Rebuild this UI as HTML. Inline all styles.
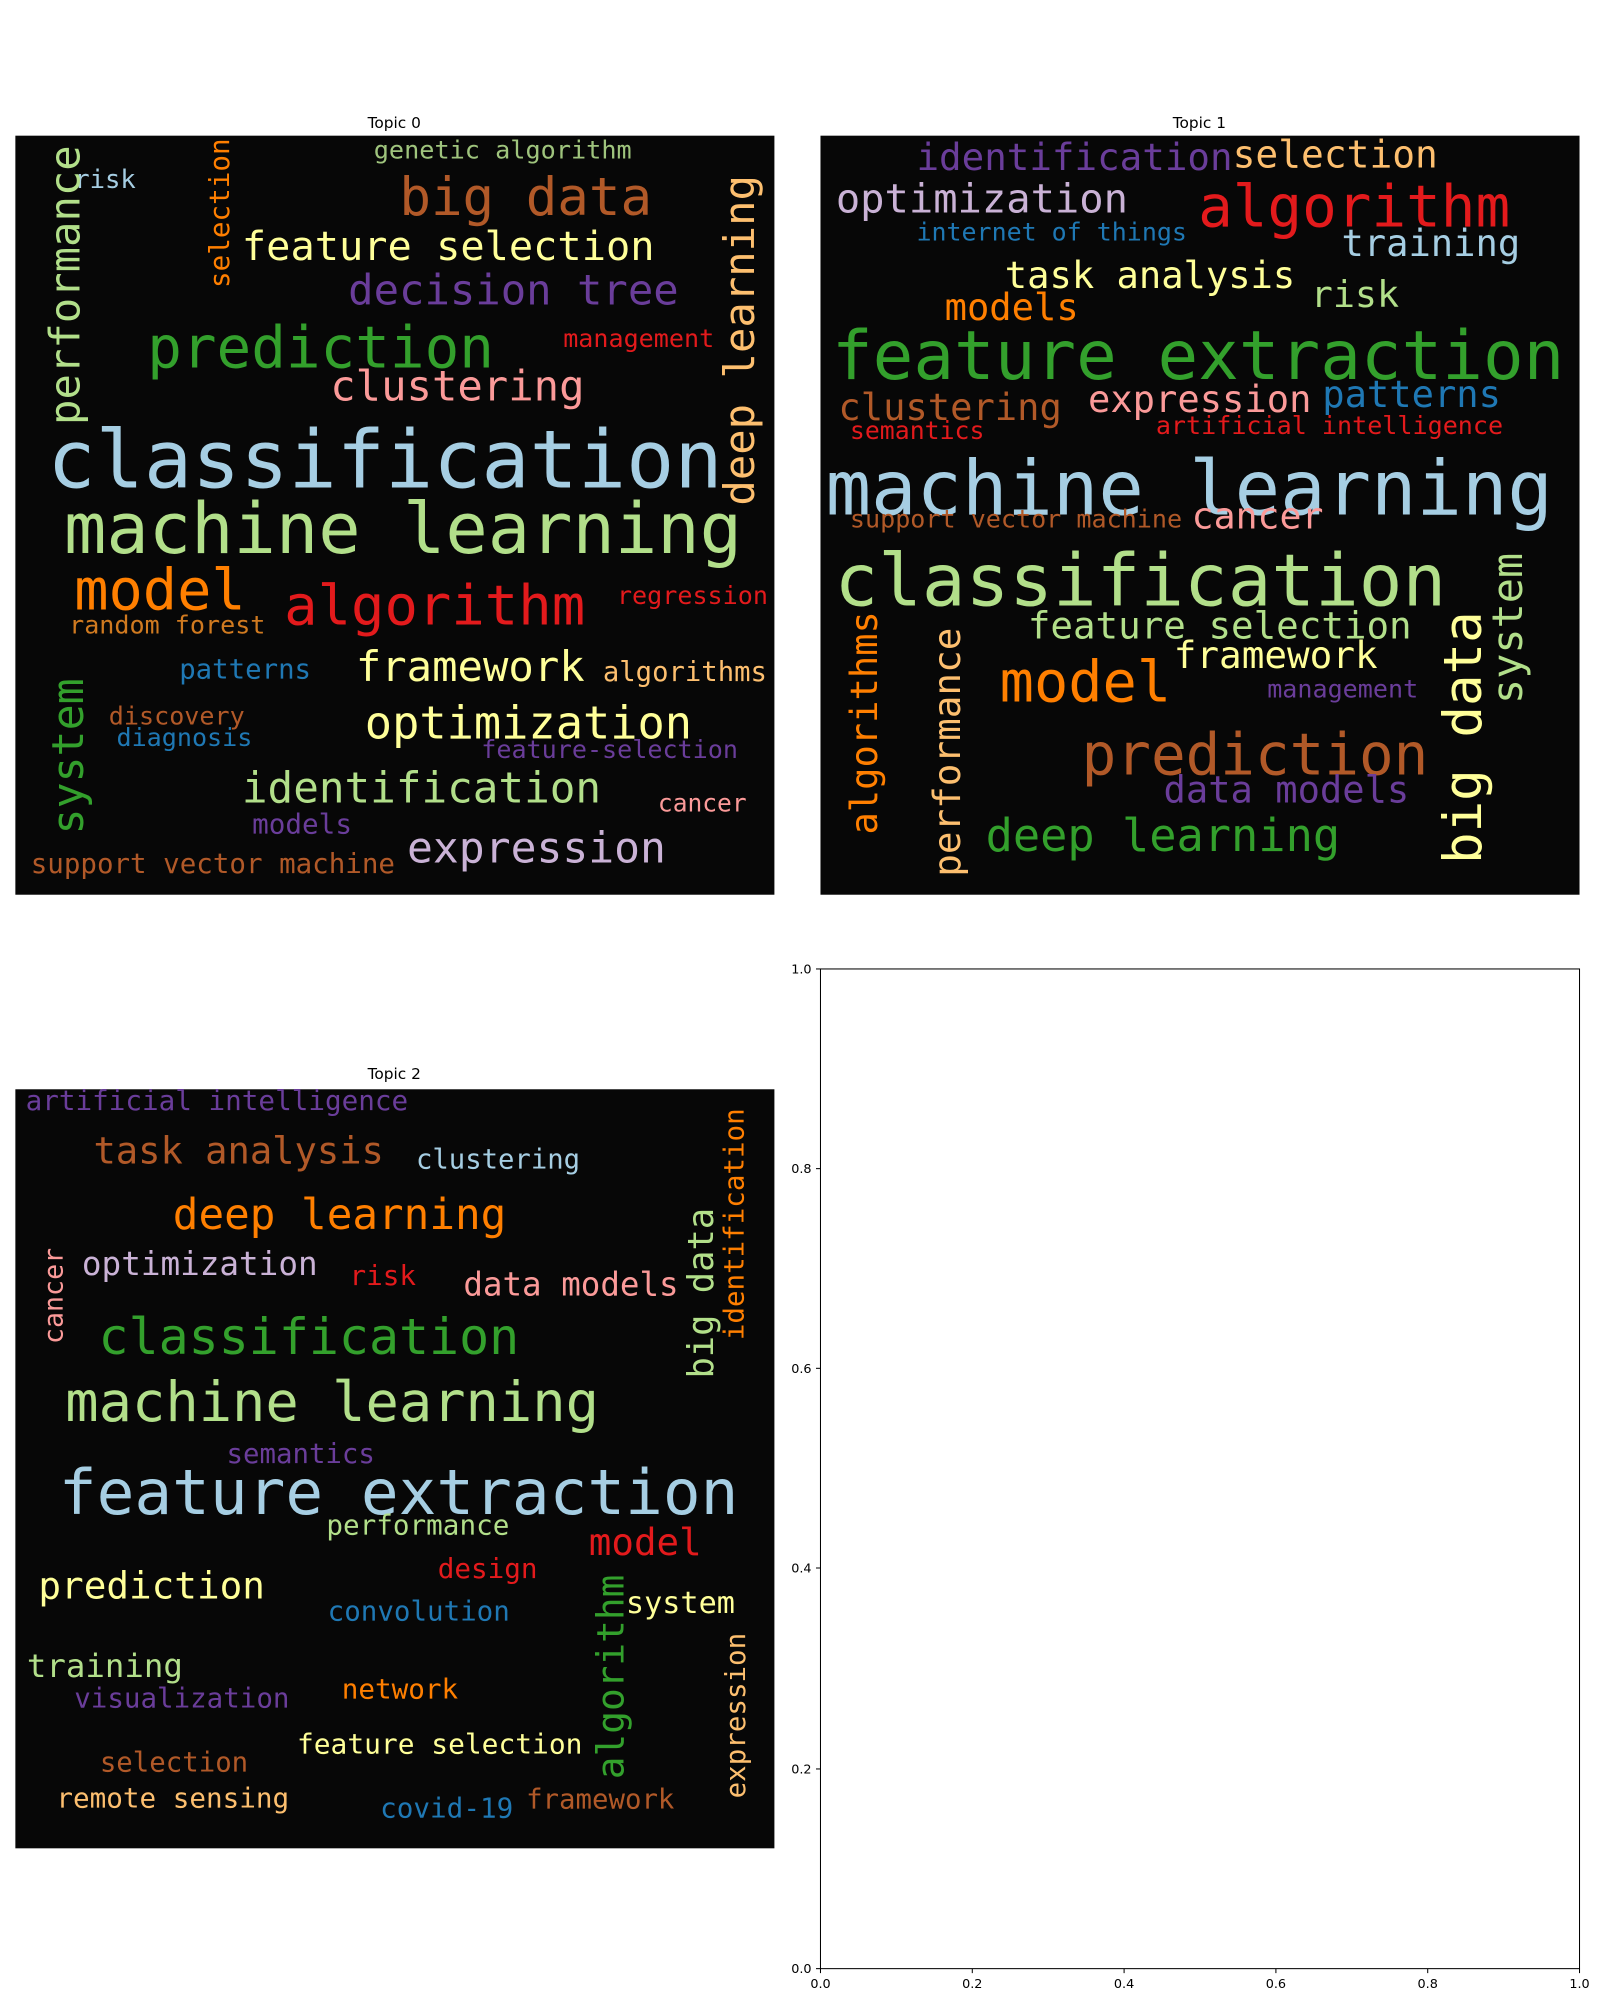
<!DOCTYPE html>
<html><head><meta charset="utf-8"><style>
html,body{margin:0;padding:0;background:#fff;}
svg{display:block}
.w{font-family:"DejaVu Sans Mono","Liberation Mono",monospace;}
.t{font-family:"DejaVu Sans","Liberation Sans",sans-serif;fill:#000}
</style></head><body>
<svg width="1600" height="2000" viewBox="0 0 1250 1562.5" xmlns="http://www.w3.org/2000/svg">
<rect x="0" y="0" width="1250" height="1562.5" fill="#fff"/>
<text class="t" x="308" y="100" font-size="12" text-anchor="middle">Topic 0</text>
<text class="t" x="937" y="100" font-size="12" text-anchor="middle">Topic 1</text>
<text class="t" x="308" y="843" font-size="12" text-anchor="middle">Topic 2</text>
<rect x="12" y="106" width="593" height="593" fill="#070707"/>
<rect x="641" y="106" width="593" height="593" fill="#070707"/>
<rect x="12" y="851" width="593" height="593" fill="#070707"/>

<g class="w">
<!-- Topic 0 -->
<text x="292" y="124" font-size="19.7" fill="#9fc47d">genetic algorithm</text>
<text x="58" y="147" font-size="20" fill="#a6cee3">risk</text>
<text transform="translate(62,332) rotate(-90)" font-size="33" fill="#b2df8a">performance</text>
<text transform="translate(179,225) rotate(-90)" font-size="21.6" fill="#ff7f00">selection</text>
<text x="312" y="168" font-size="41" fill="#b15928">big data</text>
<text x="189" y="203" font-size="31.5" fill="#ffff99">feature selection</text>
<text x="272" y="238" font-size="33" fill="#6a3d9a">decision tree</text>
<text transform="translate(589,395) rotate(-90)" font-size="33" fill="#fdbf6f">deep learning</text>
<text x="115" y="287" font-size="45" fill="#33a02c">prediction</text>
<text x="440" y="271" font-size="19.6" fill="#e31a1c">management</text>
<text x="258" y="313" font-size="33" fill="#fb9a99">clustering</text>
<text x="37" y="381" font-size="62.6" fill="#a6cee3">classification</text>
<text x="50" y="432" font-size="55" fill="#b2df8a">machine learning</text>
<text x="58" y="476" font-size="44.5" fill="#ff7f00">model</text>
<text x="222" y="488" font-size="43.4" fill="#e31a1c">algorithm</text>
<text x="482" y="472" font-size="19.6" fill="#e31a1c">regression</text>
<text x="54" y="495" font-size="19.6" fill="#d07a20">random forest</text>
<text x="140" y="530" font-size="21.4" fill="#1f78b4">patterns</text>
<text x="278" y="532" font-size="33" fill="#ffff99">framework</text>
<text x="471" y="532" font-size="21.3" fill="#fdbf6f">algorithms</text>
<text transform="translate(65,652) rotate(-90)" font-size="33.8" fill="#33a02c">system</text>
<text x="85" y="566" font-size="19.6" fill="#b15928">discovery</text>
<text x="91" y="583" font-size="19.6" fill="#1f78b4">diagnosis</text>
<text x="285" y="577" font-size="35.4" fill="#ffff99">optimization</text>
<text x="376" y="592" font-size="19.6" fill="#6a3d9a">feature-selection</text>
<text x="189" y="627" font-size="33.3" fill="#b2df8a">identification</text>
<text x="514" y="634" font-size="19.2" fill="#fb9a99">cancer</text>
<text x="197" y="651" font-size="21.6" fill="#6a3d9a">models</text>
<text x="24" y="682" font-size="21.5" fill="#b15928">support vector machine</text>
<text x="318" y="674" font-size="33.6" fill="#cab2d6">expression</text>

<!-- Topic 1 -->
<text x="716" y="133" font-size="29.3" fill="#6a3d9a">identification</text>
<text x="963" y="131" font-size="29.6" fill="#fdbf6f">selection</text>
<text x="653" y="166" font-size="31.6" fill="#cab2d6">optimization</text>
<text x="936" y="177" font-size="45" fill="#e31a1c">algorithm</text>
<text x="716" y="188" font-size="19.5" fill="#1f78b4">internet of things</text>
<text x="1048" y="200" font-size="29" fill="#a6cee3">training</text>
<text x="785" y="225" font-size="29" fill="#ffff99">task analysis</text>
<text x="1024" y="240" font-size="28.7" fill="#b2df8a">risk</text>
<text x="738" y="250" font-size="29" fill="#ff7f00">models</text>
<text x="650" y="296" font-size="52.8" fill="#33a02c">feature extraction</text>
<text x="655" y="328" font-size="29" fill="#b15928">clustering</text>
<text x="850" y="322" font-size="29" fill="#fb9a99">expression</text>
<text x="1033" y="318" font-size="29" fill="#1f78b4">patterns</text>
<text x="664" y="343" font-size="19.4" fill="#e31a1c">semantics</text>
<text x="903" y="339" font-size="19.6" fill="#e31a1c">artificial intelligence</text>
<text x="645" y="402" font-size="59" fill="#a6cee3">machine learning</text>
<text x="664" y="412" font-size="19.6" fill="#b15928">support vector machine</text>
<text x="931" y="413" font-size="28.5" fill="#fb9a99">cancer</text>
<text x="652" y="473" font-size="56.7" fill="#b2df8a">classification</text>
<text transform="translate(1189,550) rotate(-90)" font-size="32.7" fill="#b2df8a">system</text>
<text x="803" y="499" font-size="29.3" fill="#b2df8a">feature selection</text>
<text transform="translate(1157,675) rotate(-90)" font-size="41" fill="#ffff99">big data</text>
<text transform="translate(685,652) rotate(-90)" font-size="29" fill="#ff7f00">algorithms</text>
<text transform="translate(750,685) rotate(-90)" font-size="29.4" fill="#fdbf6f">performance</text>
<text x="917" y="522" font-size="29.4" fill="#ffff99">framework</text>
<text x="781" y="548" font-size="44.5" fill="#ff7f00">model</text>
<text x="990" y="545" font-size="19.6" fill="#6a3d9a">management</text>
<text x="845" y="605" font-size="45" fill="#b15928">prediction</text>
<text x="909" y="627" font-size="29" fill="#6a3d9a">data models</text>
<text x="770" y="665" font-size="35.4" fill="#33a02c">deep learning</text>

<!-- Topic 2 -->
<text x="20" y="867" font-size="21.6" fill="#6a3d9a">artificial intelligence</text>
<text x="73" y="909" font-size="29" fill="#b15928">task analysis</text>
<text x="325" y="913" font-size="21.3" fill="#a6cee3">clustering</text>
<text transform="translate(581,1047) rotate(-90)" font-size="21.5" fill="#ff7f00">identification</text>
<text x="135" y="960" font-size="33.3" fill="#ff7f00">deep learning</text>
<text transform="translate(557,1077) rotate(-90)" font-size="27.7" fill="#b2df8a">big data</text>
<text transform="translate(49,1050) rotate(-90)" font-size="20.8" fill="#fb9a99">cancer</text>
<text x="64" y="996" font-size="25.5" fill="#cab2d6">optimization</text>
<text x="273" y="1004" font-size="21.6" fill="#e31a1c">risk</text>
<text x="362" y="1012" font-size="25.4" fill="#fb9a99">data models</text>
<text x="77" y="1058" font-size="39" fill="#33a02c">classification</text>
<text x="51" y="1110" font-size="43.3" fill="#b2df8a">machine learning</text>
<text x="177" y="1143" font-size="21.4" fill="#6a3d9a">semantics</text>
<text x="46" y="1183" font-size="49" fill="#a6cee3">feature extraction</text>
<text x="255" y="1199" font-size="21.6" fill="#b2df8a">performance</text>
<text x="460" y="1215" font-size="29.3" fill="#e31a1c">model</text>
<text x="342" y="1233" font-size="21.6" fill="#e31a1c">design</text>
<text x="30" y="1249" font-size="29.4" fill="#ffff99">prediction</text>
<text transform="translate(487,1390) rotate(-90)" font-size="29.5" fill="#33a02c">algorithm</text>
<text x="489" y="1260" font-size="23.6" fill="#ffff99">system</text>
<text x="256" y="1266" font-size="21.5" fill="#1f78b4">convolution</text>
<text transform="translate(582,1405) rotate(-90)" font-size="21.5" fill="#fdbf6f">expression</text>
<text x="21" y="1310" font-size="25.3" fill="#b2df8a">training</text>
<text x="267" y="1327" font-size="21.6" fill="#ff7f00">network</text>
<text x="58" y="1334" font-size="21.5" fill="#6a3d9a">visualization</text>
<text x="232" y="1370" font-size="21.8" fill="#ffff99">feature selection</text>
<text x="78" y="1384" font-size="21.4" fill="#b15928">selection</text>
<text x="44" y="1412" font-size="21.6" fill="#fdbf6f">remote sensing</text>
<text x="297" y="1420" font-size="21.6" fill="#1f78b4">covid-19</text>
<text x="411" y="1413" font-size="21.4" fill="#b15928">framework</text>
</g>

<!-- empty axes -->
<rect x="641" y="757" width="593" height="781" fill="none" stroke="#000" stroke-width="0.8"/>
<g stroke="#000" stroke-width="0.8">
<line x1="637.5" y1="1538" x2="641" y2="1538"/>
<line x1="637.5" y1="1382" x2="641" y2="1382"/>
<line x1="637.5" y1="1225" x2="641" y2="1225"/>
<line x1="637.5" y1="1069" x2="641" y2="1069"/>
<line x1="637.5" y1="913" x2="641" y2="913"/>
<line x1="637.5" y1="757" x2="641" y2="757"/>
<line x1="641" y1="1538" x2="641" y2="1541.5"/>
<line x1="759.6" y1="1538" x2="759.6" y2="1541.5"/>
<line x1="878.2" y1="1538" x2="878.2" y2="1541.5"/>
<line x1="996.8" y1="1538" x2="996.8" y2="1541.5"/>
<line x1="1115.4" y1="1538" x2="1115.4" y2="1541.5"/>
<line x1="1234" y1="1538" x2="1234" y2="1541.5"/>
</g>
<g class="t" font-size="10" text-anchor="end">
<text x="634" y="1541.5">0.0</text>
<text x="634" y="1385.5">0.2</text>
<text x="634" y="1228.5">0.4</text>
<text x="634" y="1072.5">0.6</text>
<text x="634" y="916.5">0.8</text>
<text x="634" y="760.5">1.0</text>
</g>
<g class="t" font-size="10" text-anchor="middle">
<text x="641" y="1553">0.0</text>
<text x="759.6" y="1553">0.2</text>
<text x="878.2" y="1553">0.4</text>
<text x="996.8" y="1553">0.6</text>
<text x="1115.4" y="1553">0.8</text>
<text x="1234" y="1553">1.0</text>
</g>
</svg>
</body></html>
